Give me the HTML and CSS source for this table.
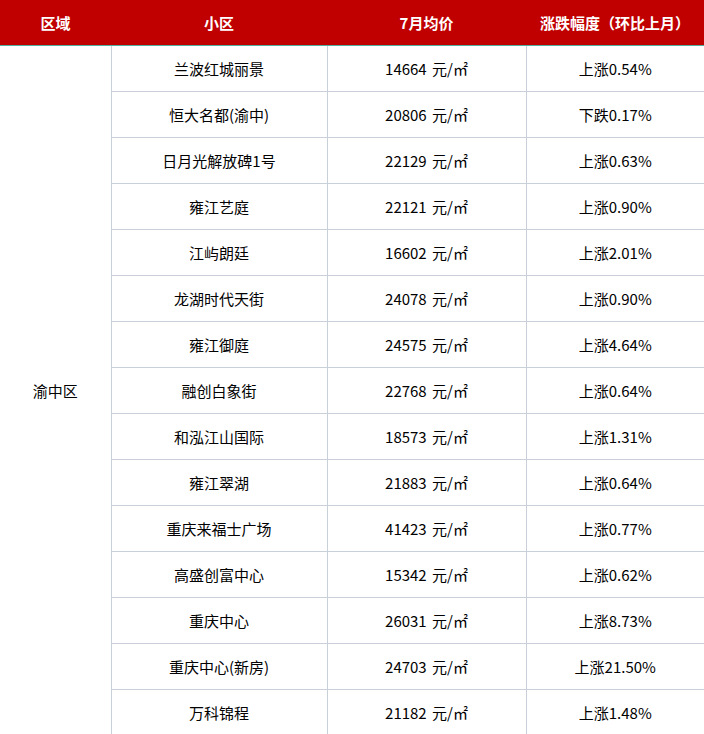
FILE: index.html
```html
<!DOCTYPE html>
<html lang="zh-CN">
<head>
<meta charset="utf-8">
<link rel="stylesheet" href="styles.css">
</head>
<body>
<table class="price-table">
  <colgroup>
    <col class="c-area"><col class="c-name"><col class="c-price"><col class="c-change">
  </colgroup>
  <thead>
    <tr><th>区域</th><th>小区</th><th>7月均价</th><th>涨跌幅度（环比上月）</th></tr>
  </thead>
  <tbody>
    <tr><td class="area" rowspan="15">渝中区</td><td>兰波红城丽景</td><td>14664 元/㎡</td><td>上涨0.54%</td></tr>
    <tr><td>恒大名都(渝中)</td><td>20806 元/㎡</td><td>下跌0.17%</td></tr>
    <tr><td>日月光解放碑1号</td><td>22129 元/㎡</td><td>上涨0.63%</td></tr>
    <tr><td>雍江艺庭</td><td>22121 元/㎡</td><td>上涨0.90%</td></tr>
    <tr><td>江屿朗廷</td><td>16602 元/㎡</td><td>上涨2.01%</td></tr>
    <tr><td>龙湖时代天街</td><td>24078 元/㎡</td><td>上涨0.90%</td></tr>
    <tr><td>雍江御庭</td><td>24575 元/㎡</td><td>上涨4.64%</td></tr>
    <tr><td>融创白象街</td><td>22768 元/㎡</td><td>上涨0.64%</td></tr>
    <tr><td>和泓江山国际</td><td>18573 元/㎡</td><td>上涨1.31%</td></tr>
    <tr><td>雍江翠湖</td><td>21883 元/㎡</td><td>上涨0.64%</td></tr>
    <tr><td>重庆来福士广场</td><td>41423 元/㎡</td><td>上涨0.77%</td></tr>
    <tr><td>高盛创富中心</td><td>15342 元/㎡</td><td>上涨0.62%</td></tr>
    <tr><td>重庆中心</td><td>26031 元/㎡</td><td>上涨8.73%</td></tr>
    <tr><td>重庆中心(新房)</td><td>24703 元/㎡</td><td>上涨21.50%</td></tr>
    <tr><td>万科锦程</td><td>21182 元/㎡</td><td>上涨1.48%</td></tr>
  </tbody>
</table>
</body>
</html>
```
FILE: styles.css
```css
html, body {
  margin: 0;
  padding: 0;
  background: #fff;
}
body {
  font-family: "Noto Sans CJK SC", "Liberation Sans", sans-serif;
  font-size: 15px;
  color: #000;
}
.price-table {
  width: 704px;
  border-collapse: collapse;
  table-layout: fixed;
}
.c-area { width: 111px; }
.c-name { width: 216px; }
.c-price { width: 199px; }
.c-change { width: 178px; }
.price-table th {
  background: #c00000;
  color: #fff;
  font-weight: bold;
  font-size: 15px;
  height: 45px;
  padding: 0;
  text-align: center;
  border-bottom: 1px solid #4fb09e;
  line-height: 1;
}
.price-table td {
  height: 45px;
  padding: 0;
  text-align: center;
  line-height: 1;
  border-bottom: 1px solid #c9d0da;
  border-left: 1px solid #c9d0da;
}
.price-table td.area {
  border-left: none;
  border-bottom: none;
}
.price-table td:nth-child(2),
.price-table td:nth-child(3) {
  word-spacing: 2px;
}
```
